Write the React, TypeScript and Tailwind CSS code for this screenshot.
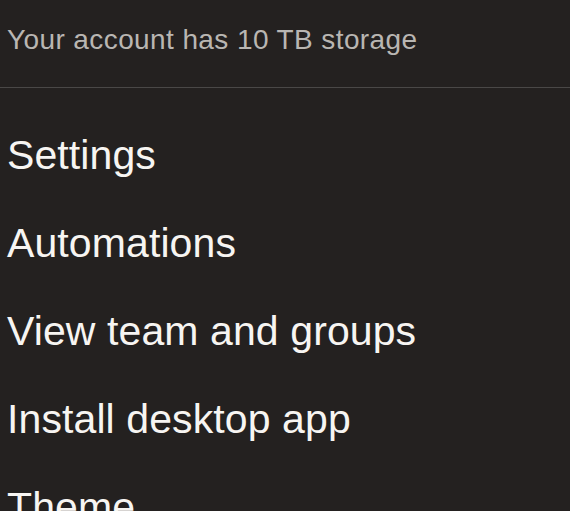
const ITEMS = ['Settings', 'Automations', 'View team and groups', 'Install desktop app', 'Theme']

export default function App() {
  return (
    <div className="h-[511px] w-[570px] overflow-hidden bg-[#242120] font-['Liberation_Sans',Arial,sans-serif]">
      {/* Storage note */}
      <div className="border-b border-[#4a4847] pb-[27px] pl-[7px] pt-[20px] text-[28px] leading-[40px] tracking-[0.4px] text-[#b9b6b2]">
        Your account has 10 TB storage
      </div>

      {/* Menu */}
      <nav className="flex flex-col pt-[23px]">
        {ITEMS.map((label) => (
          <a
            key={label}
            href="#"
            className="h-[88px] shrink-0 pl-[7px] text-[41px] leading-[88px] tracking-[0.1px] text-[#f7f5f2]"
          >
            {label}
          </a>
        ))}
      </nav>
    </div>
  )
}
